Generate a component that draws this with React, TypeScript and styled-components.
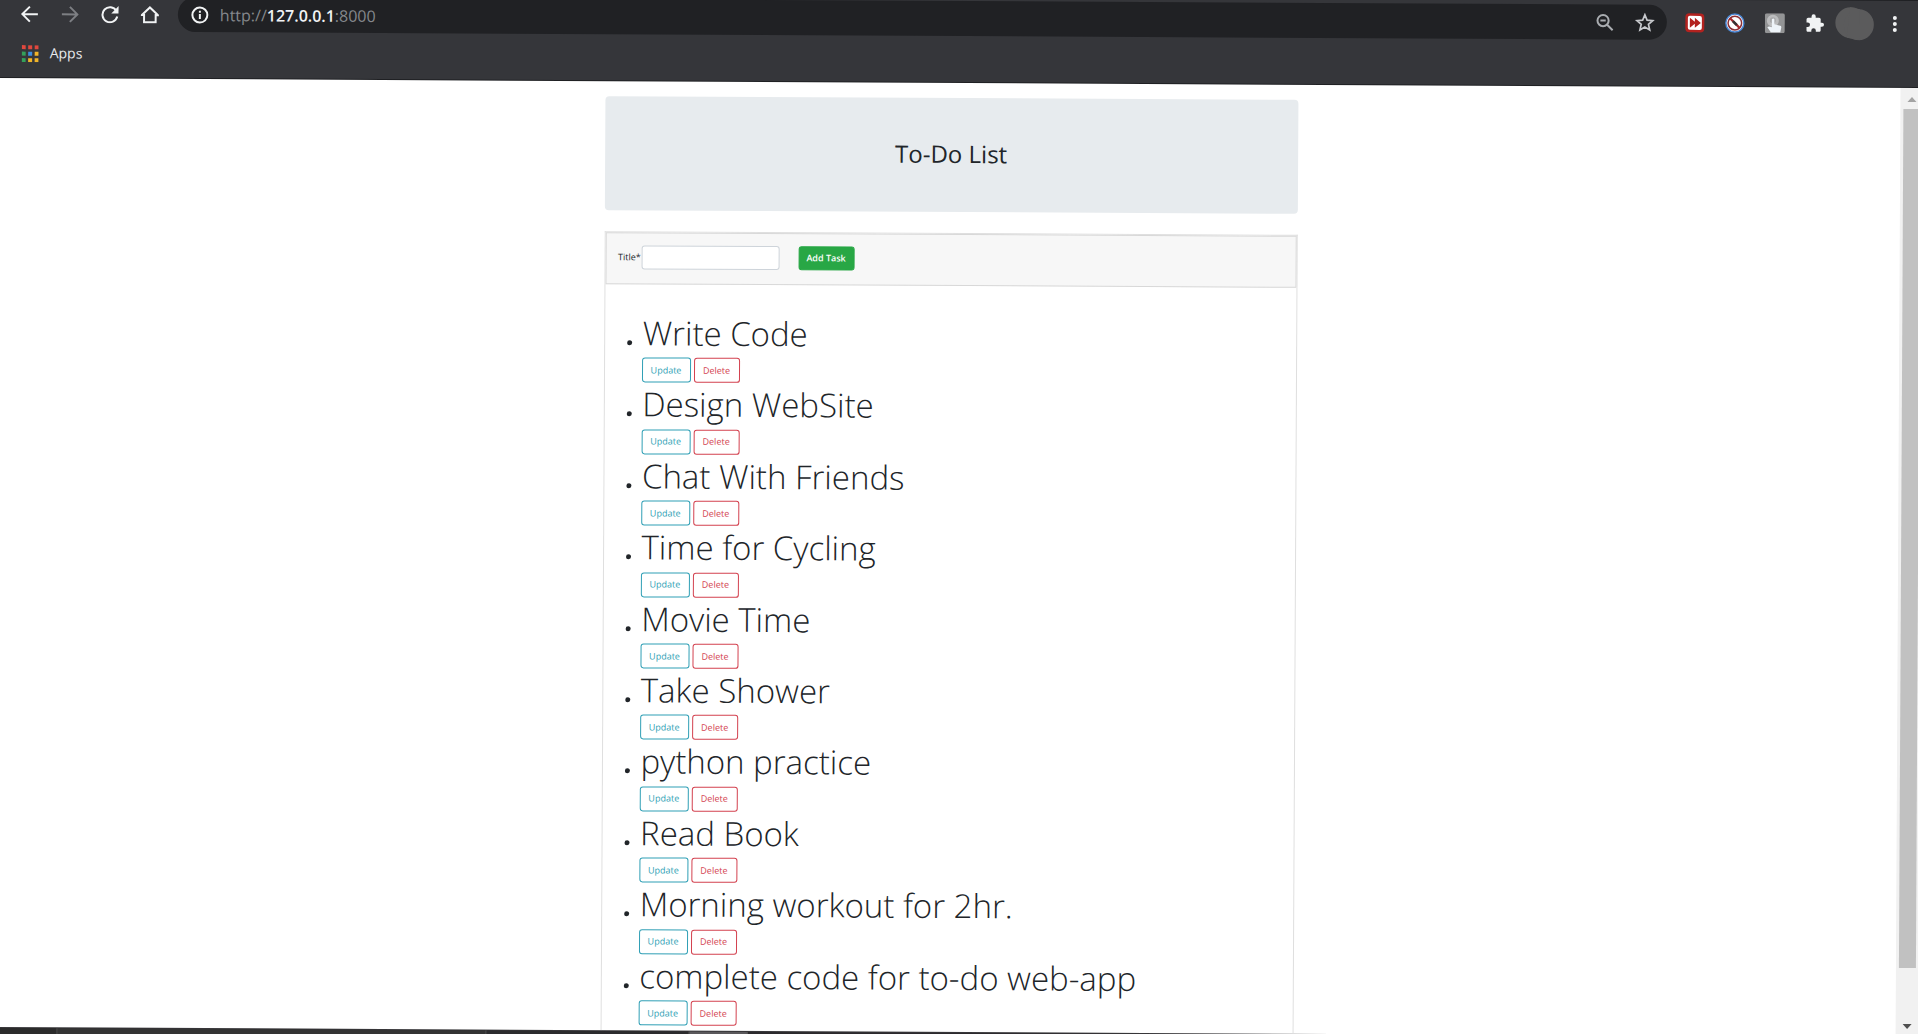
import React, { useState } from "react";
import styled, { createGlobalStyle } from "styled-components";

const GlobalStyle = createGlobalStyle`
  * { box-sizing: border-box; }
  html, body { margin: 0; height: 100%; overflow: hidden; background: #1f2023; }
  body, button, input { font-family: "Open Sans", "Noto Sans", sans-serif; }
`;

/* The whole desktop is tilted slightly clockwise. */
const Screen = styled.div`
  width: calc(100% + 6px);
  margin-top: -9px;
  transform: rotate(0.3deg);
  transform-origin: 0 0;
`;

const Window = styled.div`
  display: flex;
  flex-direction: column;
  height: calc(100vh + 2px);
`;

const Chrome = styled.header`
  flex: none;
  height: 87px;
  padding-top: 5px;
  background: #35363a;
  border-bottom: 1px solid #1f2023;
`;

const Toolbar = styled.nav`
  display: flex;
  align-items: center;
  height: 35px;
  padding: 0 9px 0 10px;
`;

const IconButton = styled.button<{ $dim?: boolean }>`
  display: flex;
  align-items: center;
  justify-content: center;
  flex: none;
  width: 40px;
  height: 35px;
  padding: 0;
  border: 0;
  background: none;
  color: ${(p) => (p.$dim ? "#7d7f83" : "#f1f3f4")};
`;

const AddressBar = styled.div`
  display: flex;
  flex: 1;
  align-items: center;
  height: 35px;
  margin: 0 8px;
  padding: 0 2px;
  border-radius: 18px;
  background: #202124;
`;

const Url = styled.a`
  flex: 1;
  color: #85888c;
  font-size: 16px;
  line-height: 22px;
  text-decoration: none;
  b { color: #f1f3f4; font-weight: 600; }
`;

const Bookmarks = styled.div`
  display: flex;
  align-items: center;
  height: 44px;
  padding-left: 22px;
`;

const AppsLink = styled.a`
  display: flex;
  align-items: center;
  gap: 11px;
  color: #e8eaed;
  font-size: 14px;
  line-height: 20px;
  text-decoration: none;
`;

const Viewport = styled.div`
  display: flex;
  flex: 1;
  min-height: 0;
  background: #fff;
`;

const Page = styled.main`
  flex: 1;
  display: flex;
  flex-direction: column;
  align-items: center;
  gap: 21px;
  min-width: 0;
  padding: 15px 0 0 3px;
  overflow: hidden;
  color: #212529;
`;

const Banner = styled.section`
  flex: none;
  width: 100%;
  max-width: 693px;
  height: 114px;
  padding-top: 39px;
  border-radius: 4px;
  background: #e7ebee;
`;

const Heading = styled.h1`
  margin: 0;
  font-size: 24px;
  line-height: 34px;
  font-weight: 500;
  text-align: center;
`;

const Card = styled.section`
  flex: 1;
  width: 100%;
  max-width: 693px;
  border: 1px solid #dfdfdf;
  border-bottom: 0;
`;

const CardHeader = styled.form`
  display: flex;
  align-items: center;
  height: 52px;
  padding: 0 12px 2px;
  border: 1px solid #d8d8d8;
  background: #f7f7f7;
`;

const Label = styled.label`
  width: 23px;
  font-size: 9px;
  line-height: 14px;
  white-space: nowrap;
`;

const TitleInput = styled.input`
  width: 138px;
  height: 24px;
  margin-right: 19px;
  padding: 0 6px;
  border: 1px solid #ced4da;
  border-radius: 3px;
  background: #fff;
  font-size: 9px;
`;

const AddButton = styled.button`
  width: 56px;
  height: 24px;
  padding: 0;
  border: 1px solid #28a745;
  border-radius: 3px;
  background: #28a745;
  color: #fff;
  font-size: 9px;
  font-weight: 600;
  line-height: 14px;
`;

const Tasks = styled.ul`
  display: grid;
  grid-auto-rows: 1fr;
  height: 714px;
  margin: 27px 0 0;
  padding: 0 0 0 22px;
  list-style: none;
`;

const Task = styled.li`
  display: grid;
  grid-template-columns: 15px 1fr;
  grid-template-rows: 1fr 25px;
`;

const Bullet = styled.span`
  width: 5px;
  height: 5px;
  margin-top: 29px;
  border-radius: 50%;
  background: #212529;
`;

const TaskTitle = styled.h2`
  margin: 0;
  font-size: 33px;
  font-weight: 300;
  line-height: 44px;
  padding-left: 1px;
  white-space: nowrap;
`;

const Actions = styled.div`
  grid-column: 2;
  display: flex;
  gap: 3px;
`;

const OutlineButton = styled.button<{ $color: string; $width: number }>`
  width: ${(p) => p.$width}px;
  height: 25px;
  padding: 0;
  border: 1px solid ${(p) => p.$color};
  border-radius: 3px;
  background: #fff;
  color: ${(p) => p.$color};
  font-size: 9px;
  line-height: 14px;
`;

const Scrollbar = styled.div`
  display: flex;
  flex-direction: column;
  flex: none;
  width: 23px;
  padding: 0 3px;
  background: #f1f1f1;
`;

const ScrollArrow = styled.svg`
  flex: none;
  width: 17px;
  height: 21px;
`;

const Thumb = styled.div`
  flex: 860;
  background: #c1c1c1;
`;

const TrackRest = styled.div`
  flex: 48;
`;

const Taskbar = styled.footer`
  display: flex;
  height: 16px;
  background: #2c2a2d;
  border-top: 1px solid #38373a;
`;

const TaskbarSlot = styled.div<{ $width: number; $tone: string }>`
  width: ${(p) => p.$width}px;
  border-right: 1px solid #555;
  background: ${(p) => p.$tone};
`;

const stroke = { fill: "none", stroke: "currentColor", strokeWidth: 2 } as const;

const BackIcon = () => (
  <svg width="18" height="18" viewBox="0 0 18 18" {...stroke}><path d="M17 9H2M9 1.5L1.5 9L9 16.5" /></svg>
);
const ForwardIcon = () => (
  <svg width="18" height="18" viewBox="0 0 18 18" {...stroke}><path d="M1 9h15M9 1.5L16.500 9L9 16.5" /></svg>
);
const ReloadIcon = () => (
  <svg width="18" height="18" viewBox="0 0 18 18" {...stroke}>
    <path d="M15.500 5.200A7.500 7.500 0 1 0 16.400 11" />
    <path d="M17.700 .5v7.300h-7.300z" fill="currentColor" stroke="none" />
  </svg>
);
const HomeIcon = () => (
  <svg width="18" height="18" viewBox="0 0 18 18" {...stroke}>
    <path d="M1 9.300L9 1.700l8 7.600h-2.200V16.500H3.200V9.300z" />
  </svg>
);
const InfoIcon = () => (
  <svg width="18" height="18" viewBox="0 0 18 18" {...stroke}>
    <circle cx="9" cy="9" r="7.500" /><path d="M9 8v5M9 4.800v2" />
  </svg>
);
const ZoomOutIcon = () => (
  <svg width="18" height="18" viewBox="0 0 18 18" {...stroke} stroke="#a9acb0">
    <circle cx="7.200" cy="7.200" r="5.600" /><path d="M11.300 11.300l5.500 5.500M4.500 7.200h5.400" />
  </svg>
);
const StarIcon = () => (
  <svg width="20" height="20" viewBox="0 0 20 20" fill="none" stroke="#c6c8cc" strokeWidth="1.700">
    <path d="M10 2.200l2.200 5.300 5.700.5-4.300 3.700 1.300 5.600L10 14.300l-4.900 3 1.300-5.600L2.100 8l5.700-.5z" />
  </svg>
);
const SkipIcon = () => (
  <svg width="20" height="20" viewBox="0 0 20 20">
    <rect x=".5" y=".5" width="19" height="19" rx="4" fill="#b3221f" />
    <rect x="3" y="3" width="14" height="14" rx="2" fill="#fff" />
    <path d="M5 5l5 4V5l6 5-6 5v-4l-5 4z" fill="#b3221f" />
  </svg>
);
const BlockIcon = () => (
  <svg width="20" height="20" viewBox="0 0 20 20">
    <circle cx="10" cy="10" r="9" fill="#fff" stroke="#4b87d4" strokeWidth="1.500" />
    <circle cx="10" cy="10" r="6.800" fill="none" stroke="#8c3036" strokeWidth="1.500" />
    <path d="M5 5l10 10" stroke="#a5282c" strokeWidth="2.200" /><path d="M8 8l4 4" stroke="#333" strokeWidth="2.500" />
  </svg>
);
const TouchIcon = () => (
  <svg width="20" height="20" viewBox="0 0 20 20">
    <rect width="20" height="20" rx="2" fill="#939495" />
    <circle cx="8" cy="7.500" r="6" fill="#bcbdbe" /><circle cx="8" cy="7" r="3" fill="#a7a8a9" />
    <path d="M7 6q1.500-1.500 2.500 0v5l6 1.500q1 .3 1 1.500l-1 5H6L2.500 14q1.500-1.500 4.500 0z" fill="#eef4f9" />
  </svg>
);
const PuzzleIcon = () => (
  <svg width="20" height="20" viewBox="0 0 24 24" fill="currentColor">
    <path d="M20.500 11H19V7c0-1.100-.9-2-2-2h-4V3.500a2.500 2.500 0 0 0-5 0V5H4c-1.100 0-2 .9-2 2v3.800h1.500a2.700 2.700 0 0 1 0 5.400H2V20c0 1.100.9 2 2 2h3.800v-1.500a2.700 2.700 0 0 1 5.400 0V22H17c1.100 0 2-.9 2-2v-4h1.500a2.500 2.500 0 0 0 0-5z" />
  </svg>
);
const ProfileIcon = () => (
  <svg width="40" height="34" viewBox="0 0 40 34" fill="#5b5b5c">
    <ellipse cx="16" cy="16" rx="15.500" ry="15.500" /><ellipse cx="24" cy="18" rx="15" ry="15.500" /><path d="M15 .5L25 2.500v31L12 31z" />
  </svg>
);
const MenuIcon = () => (
  <svg width="6" height="18" viewBox="0 0 6 18" fill="currentColor">
    <circle cx="3" cy="3" r="2" /><circle cx="3" cy="9" r="2" /><circle cx="3" cy="15" r="2" />
  </svg>
);

const appColors = ["#e0483e", "#e0483e", "#e0483e", "#34a05a", "#3b8de0", "#f0b429", "#34a05a", "#f0b429", "#f0b429"];
const AppsIcon = () => (
  <svg width="17" height="17" viewBox="0 0 17 17">
    {appColors.map((c, i) => (
      <rect key={i} x={(i % 3) * 6.500} y={Math.floor(i / 3) * 6.500} width="4" height="4" fill={c} />
    ))}
  </svg>
);

const tasks = [
  "Write Code",
  "Design WebSite",
  "Chat With Friends",
  "Time for Cycling",
  "Movie Time",
  "Take Shower",
  "python practice",
  "Read Book",
  "Morning workout for 2hr.",
  "complete code for to-do web-app",
];

export default function App() {
  const [title, setTitle] = useState("");
  return (
    <>
      <GlobalStyle />
      <Screen>
        <Window>
          <Chrome>
            <Toolbar>
              <IconButton aria-label="Back"><BackIcon /></IconButton>
              <IconButton $dim aria-label="Forward"><ForwardIcon /></IconButton>
              <IconButton aria-label="Reload"><ReloadIcon /></IconButton>
              <IconButton aria-label="Home"><HomeIcon /></IconButton>
              <AddressBar>
                <IconButton aria-label="Site information"><InfoIcon /></IconButton>
                <Url href="#">http://<b>127.0.0.1</b>:8000</Url>
                <IconButton aria-label="Zoom"><ZoomOutIcon /></IconButton>
                <IconButton aria-label="Bookmark this page"><StarIcon /></IconButton>
              </AddressBar>
              <IconButton aria-label="Skip extension"><SkipIcon /></IconButton>
              <IconButton aria-label="Blocker extension"><BlockIcon /></IconButton>
              <IconButton aria-label="Touch extension"><TouchIcon /></IconButton>
              <IconButton aria-label="Extensions"><PuzzleIcon /></IconButton>
              <IconButton aria-label="Profile"><ProfileIcon /></IconButton>
              <IconButton aria-label="Menu"><MenuIcon /></IconButton>
            </Toolbar>
            <Bookmarks>
              <AppsLink href="#"><AppsIcon />Apps</AppsLink>
            </Bookmarks>
          </Chrome>
          <Viewport>
            <Page>
              <Banner>
                <Heading>To-Do List</Heading>
              </Banner>
              <Card>
                <CardHeader onSubmit={(e) => e.preventDefault()}>
                  <Label htmlFor="title">Title*</Label>
                  <TitleInput id="title" value={title} onChange={(e) => setTitle(e.target.value)} />
                  <AddButton type="submit">Add Task</AddButton>
                </CardHeader>
                <Tasks>
                  {tasks.map((task) => (
                    <Task key={task}>
                      <Bullet />
                      <TaskTitle>{task}</TaskTitle>
                      <Actions>
                        <OutlineButton $color="#2f9fb5" $width={49}>Update</OutlineButton>
                        <OutlineButton $color="#d3414f" $width={46}>Delete</OutlineButton>
                      </Actions>
                    </Task>
                  ))}
                </Tasks>
              </Card>
            </Page>
            <Scrollbar>
              <ScrollArrow viewBox="0 0 17 21"><path d="M4 14l4.500-5 4.500 5z" fill="#a3a3a3" /></ScrollArrow>
              <Thumb />
              <TrackRest />
              <ScrollArrow viewBox="0 0 17 21"><path d="M4 8l4.500 5L13 8z" fill="#505050" /></ScrollArrow>
            </Scrollbar>
          </Viewport>
        </Window>
        <Taskbar>
          <TaskbarSlot $width={63} $tone="#2b2b2b" />
          <TaskbarSlot $width={429} $tone="#333333" />
          <TaskbarSlot $width={203} $tone="#2b2b2d" />
          <TaskbarSlot $width={58} $tone="#5a585b" />
        </Taskbar>
      </Screen>
    </>
  );
}
